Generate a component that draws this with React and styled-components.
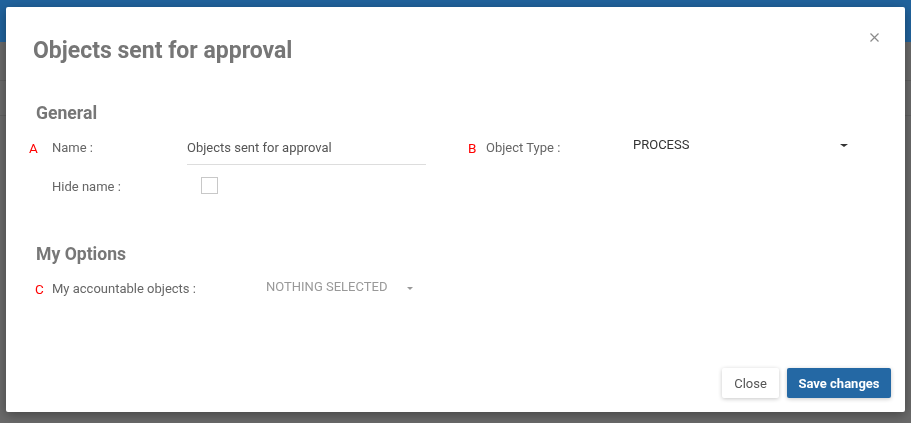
import React from "react";
import styled, { createGlobalStyle } from "styled-components";

const Global = createGlobalStyle`
  html, body { margin: 0; padding: 0; }
  body {
    font-family: Roboto, "Liberation Sans", Arial, sans-serif;
    overflow: hidden;
    background: #6a6a6a;
  }
  * { box-sizing: border-box; }
`;

const Page = styled.div`
  width: 100vw;
  height: 100vh;
  background: #6a6a6a;
`;

const PageHeader = styled.div`
  height: 42px;
  background: #21639d;
`;

const PageRow = styled.div`
  height: ${(p) => p.$h}px;
  border-bottom: 1px solid #606060;
`;

const Modal = styled.div`
  position: fixed;
  top: 7px;
  left: 6px;
  width: 899px;
  height: 405px;
  background: #fff;
  border-radius: 2px;
  box-shadow: 0 3px 12px rgba(0, 0, 0, 0.35);
  display: flex;
  flex-direction: column;
`;

const Header = styled.div`
  display: flex;
  justify-content: space-between;
  align-items: flex-start;
  padding: 31px 25px 0 27px;
`;

const Title = styled.h4`
  margin: 0;
  font-size: 23px;
  line-height: 25px;
  font-weight: 700;
  color: #767676;
`;

const CloseX = styled.button`
  width: 12px;
  height: 12px;
  margin-top: -7px;
  padding: 0;
  border: 0;
  background: transparent;
  display: flex;
  align-items: center;
  justify-content: center;
  cursor: pointer;
`;

const Body = styled.div`
  padding: 40px 0 0 23px;
`;

const Section = styled.div`
  margin-top: ${(p) => p.$mt || 0}px;
`;

const SectionTitle = styled.h5`
  margin: 0 0 7px 7px;
  font-size: 17.6px;
  line-height: 20px;
  font-weight: 700;
  color: #777;
`;

const TwoCols = styled.div`
  display: grid;
  grid-template-columns: 439px 1fr;
  margin-top: ${(p) => p.$mt || 0}px;
`;

const Field = styled.div`
  display: flex;
  align-items: flex-start;
`;

const Marker = styled.span`
  flex: none;
  width: ${(p) => p.$w}px;
  padding-left: ${(p) => p.$indent || 0}px;
  padding-top: ${(p) => p.$pt || 0}px;
  font-size: 13.5px;
  line-height: 16px;
  color: #f00;
`;

const Label = styled.label`
  flex: none;
  width: ${(p) => p.$w}px;
  padding-top: ${(p) => p.$pt || 0}px;
  font-size: 13px;
  line-height: 16px;
  color: #666;
`;

const TextInput = styled.div`
  width: 239px;
  padding: 10px 0 8px;
  font-size: 13px;
  line-height: 16px;
  color: #555;
  border-bottom: 1px solid #ddd;
`;

const Select = styled.div`
  width: ${(p) => p.$w}px;
  padding-top: ${(p) => p.$pt}px;
  display: flex;
  align-items: center;
  justify-content: space-between;
  font-size: 13px;
  line-height: 16px;
  color: ${(p) => (p.$muted ? "#999" : "#333")};
`;

const Caret = styled.span`
  width: 0;
  height: 0;
  border-left: ${(p) => p.$s}px solid transparent;
  border-right: ${(p) => p.$s}px solid transparent;
  border-top: ${(p) => p.$s - 0.5}px solid ${(p) => p.$c};
  margin-top: ${(p) => p.$mt || 0}px;
`;

const Checkbox = styled.span`
  display: block;
  width: 17px;
  height: 17px;
  margin-left: 14px;
  border: 1px solid #c8c8c8;
  background: #fff;
`;

const Footer = styled.div`
  margin-top: auto;
  display: flex;
  justify-content: flex-end;
  gap: 8px;
  padding: 0 14px 14px;
`;

const Button = styled.button`
  height: 30px;
  width: ${(p) => p.$w}px;
  border: 0;
  border-radius: 2px;
  font-family: Roboto, "Liberation Sans", Arial, sans-serif;
  font-size: 13px;
  font-weight: ${(p) => (p.$primary ? 700 : 400)};
  color: ${(p) => (p.$primary ? "#fff" : "#555")};
  background: ${(p) => (p.$primary ? "#2468a4" : "#fff")};
  box-shadow: 0 1px 4px rgba(0, 0, 0, 0.22);
  padding: 0;
  cursor: pointer;
`;

export default function App() {
  return (
    <>
      <Global />
      <Page>
        <PageHeader />
        <PageRow $h={39} />
        <PageRow $h={35} />
      </Page>
      <Modal>
        <Header>
          <Title>Objects sent for approval</Title>
          <CloseX aria-label="close">
            <svg width="9" height="9" viewBox="0 0 9 9">
              <path d="M0.5 0.5L8.5 8.5M8.5 0.5L0.5 8.5" stroke="#8a8a8a" strokeWidth="1.2" />
            </svg>
          </CloseX>
        </Header>
        <Body>
          <Section>
            <SectionTitle>General</SectionTitle>
            <TwoCols>
              <Field>
                <Marker $w={23} $pt={10}>A</Marker>
                <Label $w={135} $pt={10}>Name :</Label>
                <TextInput>Objects sent for approval</TextInput>
              </Field>
              <Field>
                <Marker $w={18} $pt={10}>B</Marker>
                <Label $w={147} $pt={10}>Object Type :</Label>
                <Select $w={215} $pt={7}>
                  PROCESS
                  <Caret $s={4} $c="#333" />
                </Select>
              </Field>
            </TwoCols>
            <TwoCols $mt={12}>
              <Field>
                <Marker $w={23} />
                <Label $w={135} $pt={2}>Hide name :</Label>
                <Checkbox />
              </Field>
            </TwoCols>
          </Section>
          <Section $mt={49}>
            <SectionTitle>My Options</SectionTitle>
            <TwoCols>
              <Field>
                <Marker $w={23} $pt={10} $indent={6}>C</Marker>
                <Label $w={214} $pt={10}>My accountable objects :</Label>
                <Select $w={147} $pt={8} $muted>
                  NOTHING SELECTED
                  <Caret $s={3.5} $c="#999" $mt={2} />
                </Select>
              </Field>
            </TwoCols>
          </Section>
        </Body>
        <Footer>
          <Button $w={57}>Close</Button>
          <Button $w={104} $primary>Save changes</Button>
        </Footer>
      </Modal>
    </>
  );
}
